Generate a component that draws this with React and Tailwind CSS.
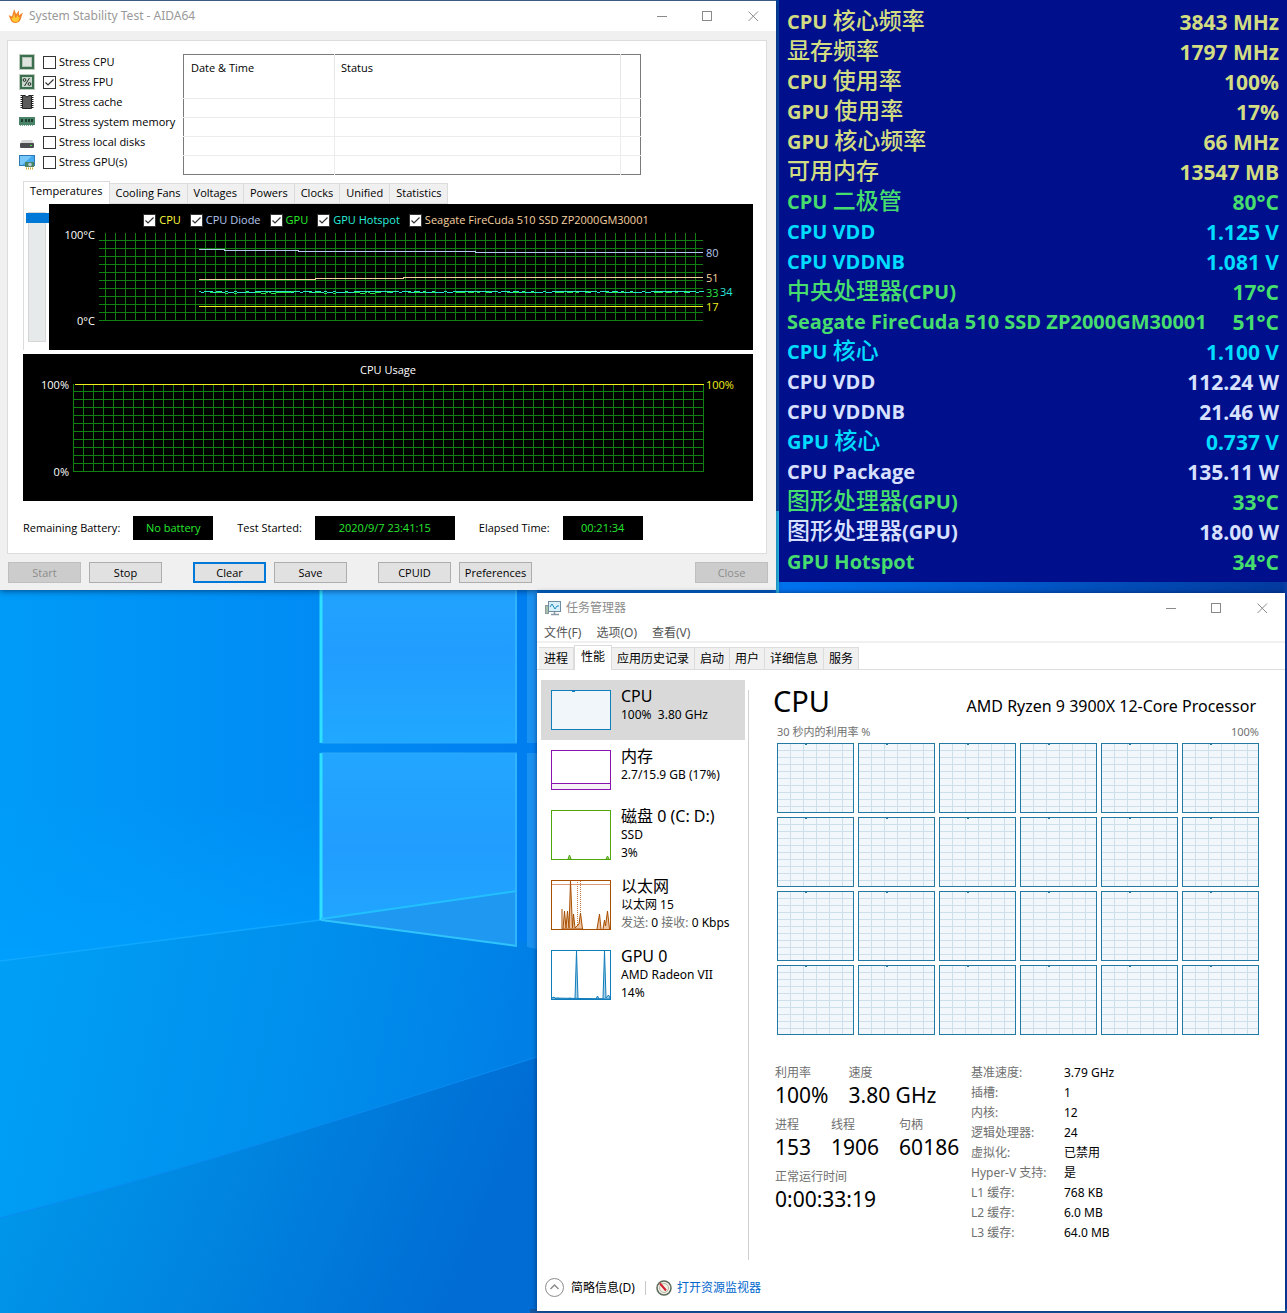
import React, { useState } from 'react';

const STRESS = [
  { id: 'cpu', label: 'Stress CPU' },
  { id: 'fpu', label: 'Stress FPU', on: true },
  { id: 'cache', label: 'Stress cache' },
  { id: 'memory', label: 'Stress system memory' },
  { id: 'disk', label: 'Stress local disks' },
  { id: 'gpu', label: 'Stress GPU(s)' },
];

const AIDA_TABS = ['Temperatures', 'Cooling Fans', 'Voltages', 'Powers', 'Clocks', 'Unified', 'Statistics'];

const LEGEND = [
  { label: 'CPU', color: 'text-[#ffff3c]' },
  { label: 'CPU Diode', color: 'text-[#b4c8f0]' },
  { label: 'GPU', color: 'text-[#28f028]' },
  { label: 'GPU Hotspot', color: 'text-[#28f0dc]' },
  { label: 'Seagate FireCuda 510 SSD ZP2000GM30001', color: 'text-[#f5d2a0]' },
];

const YELLOW = 'text-[#d2dc82]';
const GREEN = 'text-[#46dc6e]';
const CYAN = 'text-[#00dcff]';
const WHITE = 'text-[#d7e1ff]';

const SENSORS = [
  ['CPU 核心频率', '3843 MHz', YELLOW],
  ['显存频率', '1797 MHz', YELLOW],
  ['CPU 使用率', '100%', YELLOW],
  ['GPU 使用率', '17%', YELLOW],
  ['GPU 核心频率', '66 MHz', YELLOW],
  ['可用内存', '13547 MB', YELLOW],
  ['CPU 二极管', '80°C', GREEN],
  ['CPU VDD', '1.125 V', CYAN],
  ['CPU VDDNB', '1.081 V', CYAN],
  ['中央处理器(CPU)', '17°C', GREEN],
  ['Seagate FireCuda 510 SSD ZP2000GM30001', '51°C', GREEN],
  ['CPU 核心', '1.100 V', CYAN],
  ['CPU VDD', '112.24 W', WHITE],
  ['CPU VDDNB', '21.46 W', WHITE],
  ['GPU 核心', '0.737 V', CYAN],
  ['CPU Package', '135.11 W', WHITE],
  ['图形处理器(GPU)', '33°C', GREEN],
  ['图形处理器(GPU)', '18.00 W', WHITE],
  ['GPU Hotspot', '34°C', GREEN],
];

const TM_TABS = ['进程', '性能', '应用历史记录', '启动', '用户', '详细信息', '服务'];

const CPU_DETAILS = [
  ['基准速度:', '3.79 GHz'],
  ['插槽:', '1'],
  ['内核:', '12'],
  ['逻辑处理器:', '24'],
  ['虚拟化:', '已禁用'],
  ['Hyper-V 支持:', '是'],
  ['L1 缓存:', '768 KB'],
  ['L2 缓存:', '6.0 MB'],
  ['L3 缓存:', '64.0 MB'],
];

const range = (n) => Array.from({ length: n }, (_, i) => i);

function Wallpaper() {
  return (
    <svg className="absolute inset-0 h-full w-full" viewBox="0 0 1287 1313" preserveAspectRatio="xMinYMin slice" aria-hidden="true">
      <defs>
        <linearGradient id="sky" x1="0" y1="0" x2="1" y2="0">
          <stop offset="0" stopColor="#009bf8" />
          <stop offset="0.24" stopColor="#008cf4" />
          <stop offset="0.41" stopColor="#007ef0" />
          <stop offset="0.61" stopColor="#0072ee" />
          <stop offset="1" stopColor="#033a9e" />
        </linearGradient>
        <linearGradient id="glow" x1="0" y1="0" x2="0" y2="1">
          <stop offset="0" stopColor="#00a0ff" stopOpacity="0" />
          <stop offset="1" stopColor="#00a0ff" stopOpacity="0.7" />
        </linearGradient>
        <linearGradient id="floor" x1="0" y1="0" x2="1" y2="0.15">
          <stop offset="0" stopColor="#00a0f6" />
          <stop offset="0.6" stopColor="#008fec" />
          <stop offset="1" stopColor="#007fe6" />
        </linearGradient>
        <linearGradient id="low" x1="0" y1="0" x2="1" y2="0.2">
          <stop offset="0" stopColor="#009bec" />
          <stop offset="0.5" stopColor="#0085e0" />
          <stop offset="1" stopColor="#006cd4" />
        </linearGradient>
        <linearGradient id="pane" x1="0" y1="0" x2="0" y2="1">
          <stop offset="0" stopColor="#22a6ff" />
          <stop offset="0.5" stopColor="#219dff" />
          <stop offset="1" stopColor="#20a8ff" />
        </linearGradient>
      </defs>
      <rect width="1287" height="1313" fill="url(#sky)" />
      <path d="M0 800 L321 800 V920 L0 961Z" fill="url(#glow)" />
      <path d="M0 961 L321 920 L537 944 V1313 H0Z" fill="url(#floor)" />
      <path d="M0 1218 C180 1172 380 1106 537 1057 V1313 H0Z" fill="url(#low)" />
      <path d="M0 1218 C180 1172 380 1106 537 1057" fill="none" stroke="#0a8cf2" strokeWidth="1" />
      <path d="M0 961 L321 920" stroke="#10a8ff" strokeWidth="1.5" />
      <rect x="321" y="560" width="196" height="183" fill="url(#pane)" />
      <path d="M321 753 H517 V946 L321 920Z" fill="url(#pane)" />
      <path d="M321 920 L517 891 V946Z" fill="#1f98f2" />
      <path d="M527 560 H537 V743 H527Z M527 753 H537 V949 L527 947Z" fill="#1a92f2" />
      <path d="M321 560 V743 M321 753 V920" stroke="#2ee0ff" strokeWidth="3" />
      <path d="M321 919 L517 891" stroke="#22c0ff" strokeWidth="2" />
      <path d="M321 920 L517 946" stroke="#30c4fc" strokeWidth="2" />
      <path d="M516 560 V743 M516 753 V946" stroke="#30b4fc" strokeWidth="2" />
      <path d="M321 743 H517 M321 753 H517" stroke="#2aaafc" strokeWidth="1" />
      <rect x="776" y="0" width="3" height="511" fill="#0846a6" />
      <rect x="776" y="511" width="3" height="82" fill="#2cc0ee" />
      <rect x="1284" y="582" width="3" height="731" fill="#0a3ea4" />
      <rect x="530" y="1309" width="757" height="4" fill="#1458a4" />
    </svg>
  );
}

function WindowButtons() {
  return (
    <div className="flex">
      <button aria-label="Minimize" className="flex h-7 w-[46px] items-center justify-center text-[#8a8a8a]">
        <svg width="11" height="11" stroke="currentColor"><path d="M0 5.5H10" /></svg>
      </button>
      <button aria-label="Maximize" className="flex h-7 w-[45px] items-center justify-center text-[#8a8a8a]">
        <svg width="11" height="11" stroke="currentColor" fill="none"><rect x="0.5" y="0.5" width="9" height="9" /></svg>
      </button>
      <button aria-label="Close window" className="flex h-7 w-[46px] items-center justify-center text-[#8a8a8a]">
        <svg width="11" height="11" stroke="currentColor"><path d="M0.5 0.5L10 10M10 0.5L0.5 10" /></svg>
      </button>
    </div>
  );
}

function Flame() {
  return (
    <svg width="16" height="16" viewBox="0 0 16 16">
      <path d="M6 1C7 2.6 7.4 4.6 8.2 6.2C9.4 4.6 10.4 3.2 11 2.6C10.8 4.6 11 5.8 11 7.4C12 6.6 13.4 5.4 15 4.8C13.6 7 13.6 9.4 12.6 11.6C11.4 14.2 9.4 15 7.4 15C4.4 15 2.8 13.2 2.2 11C1.8 9.4 1.2 8.4 0.6 7.2C2 7.4 3 8 4 8.6C4.4 6 5.8 3.8 6 1Z" fill="#f08228" />
      <path d="M6.4 5C6.6 7.6 7 9 7.6 10C8.6 9 9.4 7.8 10 6.4C10 8.6 10.4 9.4 11.6 9.2C11.4 12 10 14 7.6 14C5 14 3.6 12.4 3.4 9.8C4.4 10.2 4.8 9.8 5 9C5.4 7.6 6 6.4 6.4 5Z" fill="#ffc832" />
    </svg>
  );
}

function StressIcon({ id }) {
  if (id === 'cpu' || id === 'fpu') {
    return (
      <svg className="shrink-0" width="16" height="16" viewBox="0 0 16 16">
        <rect x="0.5" y="0.5" width="15" height="15" fill="none" stroke="#7f9a80" strokeDasharray="1 1" />
        <rect x="1" y="1" width="14" height="14" fill="#3c6e50" />
        <rect x="3" y="3" width="10" height="10" fill={id === 'cpu' ? '#b4c4b4' : '#c8d6cc'} />
        {id === 'cpu' && <rect x="4" y="4" width="8" height="8" fill="#e0e4de" />}
        {id === 'fpu' && (
          <g fill="none" stroke="#1e2a22">
            <path d="M10.5 4L5.5 12" />
            <circle cx="5.5" cy="6" r="1.4" />
            <circle cx="10.5" cy="10" r="1.4" />
          </g>
        )}
      </svg>
    );
  }
  if (id === 'cache') {
    return (
      <svg className="shrink-0" width="16" height="16" viewBox="0 0 16 16">
        <path d="M2.5 1V15M13.5 1V15" stroke="#222" strokeWidth="2" strokeDasharray="1 1" />
        <path d="M3.5 1.5H6L8 3L10 1.5H12.5V14.5H3.5Z" fill="#5a5a5a" stroke="#222" />
      </svg>
    );
  }
  if (id === 'memory') {
    return (
      <svg className="shrink-0" width="16" height="16" viewBox="0 0 16 16">
        <rect x="0" y="3" width="16" height="8" fill="#4a8468" />
        <path d="M2 5H4V8H2ZM6 5H8V8H6ZM9 5H11V8H9ZM12 5H14V8H12Z" fill="#1e3c30" />
        <path d="M1 11.5H15" stroke="#7aa890" strokeDasharray="1 1" />
      </svg>
    );
  }
  if (id === 'disk') {
    return (
      <svg className="shrink-0" width="16" height="16" viewBox="0 0 16 16">
        <path d="M3 6H13L15 10H1Z" fill="#d4d4d4" />
        <rect x="1" y="9" width="14" height="5" rx="1" fill="#4c4c50" />
        <rect x="11" y="11" width="2" height="1" fill="#50e050" />
      </svg>
    );
  }
  return (
    <svg className="shrink-0" width="16" height="16" viewBox="0 0 16 16">
      <rect x="0.5" y="1.5" width="15" height="10" fill="#46aaf0" stroke="#2e78b4" />
      <path d="M1 2H13L3 11H1Z" fill="#78c8fa" />
      <rect x="6" y="8" width="9" height="5" fill="#4a8460" />
      <circle cx="11" cy="10.5" r="1.8" fill="#b4c8dc" />
      <path d="M7 14.5H14" stroke="#d2aa32" strokeDasharray="1 1" strokeWidth="2" />
    </svg>
  );
}

function Check({ id, label, defaultChecked, textClass }) {
  return (
    <label htmlFor={id} className="flex items-center gap-[3px] whitespace-nowrap">
      <span className="relative flex">
        <input
          id={id}
          type="checkbox"
          defaultChecked={defaultChecked}
          className="peer h-[13px] w-[13px] appearance-none border border-[#333] bg-white"
        />
        <svg className="pointer-events-none absolute inset-0 hidden peer-checked:block" width="13" height="13" fill="none" stroke="#333" strokeWidth="1.2">
          <path d="M2.5 6.5L5 9L10.5 3.5" />
        </svg>
      </span>
      <span className={textClass}>{label}</span>
    </label>
  );
}

// deterministic jitter for the two GPU traces
const jitter = (i) => (i * 7 + ((i * i) % 11)) % 3;

function TemperatureChart() {
  const noise = range(169).map((i) => `${150.5 + i * 3},${66.5 + (jitter(i) === 2 ? 1 : 0)}`).join(' ');
  const noise2 = range(169).map((i) => `${150.5 + i * 3},${67.5 - (jitter(i + 4) === 0 ? 1 : 0) + (jitter(i) === 1 && i < 60 ? 1 : 0)}`).join(' ');
  return (
    <svg className="block h-[122px] w-full" viewBox="0 0 704 122" preserveAspectRatio="xMinYMin meet" fontSize="11" shapeRendering="crispEdges">
      <g transform="translate(0 -3)">
        <g stroke="#108010">
          {range(60).map((i) => <path key={i} d={`M${56.5 + i * 10} 8V96`} />)}
          {range(11).map((i) => <path key={i} d={`M50 ${15.5 + i * 8}H654`} />)}
        </g>
        <g fill="none">
          <path d="M150 24.5H175V25.5H249V26.5H426V27.5H654" stroke="#b4c8f0" />
          <path d="M150 54.5H266V53.5H354V52.5H654" stroke="#f5d2a0" />
          <polyline points={noise2} stroke="#28e646" />
          <polyline points={noise} stroke="#28e6c8" />
          <path d="M150 81.5H654" stroke="#f0f01e" />
        </g>
        <g fill="#fff" textAnchor="end">
          <text x="46" y="14">100°C</text>
          <text x="46" y="100">0°C</text>
        </g>
        <text x="657" y="32" fill="#b4c8f0">80</text>
        <text x="657" y="57" fill="#f5d2a0">51</text>
        <text x="657" y="72" fill="#28e646">33</text>
        <text x="671" y="71" fill="#28e6dc">34</text>
        <text x="657" y="86" fill="#f0f01e">17</text>
      </g>
    </svg>
  );
}

function UsageChart() {
  return (
    <svg className="block h-[147px] w-full bg-black" viewBox="0 0 730 147" preserveAspectRatio="xMinYMin meet" fontSize="11" shapeRendering="crispEdges">
      <text x="365" y="20" fill="#fff" textAnchor="middle">CPU Usage</text>
      <g stroke="#108010">
        {range(64).map((i) => <path key={i} d={`M${50.5 + i * 10} 30V118`} />)}
        {range(11).map((i) => <path key={i} d={`M50 ${37.5 + i * 8}H681`} />)}
      </g>
      <path d="M52 30.5H681" stroke="#f0f01e" />
      <g fill="#fff" textAnchor="end">
        <text x="46" y="35">100%</text>
        <text x="46" y="122">0%</text>
      </g>
      <text x="683" y="35" fill="#f0f01e">100%</text>
    </svg>
  );
}

function AidaButton({ children, disabled, focused, className = '' }) {
  const look = disabled
    ? 'border border-[#bfbfbf] bg-[#cccccc] text-[#8c8c8c]'
    : focused
      ? 'border-2 border-[#0078d7] bg-[#e1e1e1]'
      : 'border border-[#adadad] bg-[#e1e1e1]';
  return (
    <button disabled={disabled} className={`flex h-[21px] w-[73px] items-center justify-center ${look} ${className}`}>
      {children}
    </button>
  );
}

function Readout({ label, value, width }) {
  return (
    <div className="flex items-center gap-[13px]">
      <span>{label}</span>
      <output className={`flex h-6 items-center justify-center bg-black text-[#28e632] ${width}`}>{value}</output>
    </div>
  );
}

function AidaWindow() {
  const [tab, setTab] = useState(AIDA_TABS[0]);
  return (
    <section className="min-w-0 border-t border-[#3c5a82] bg-[#f0f0f0] pb-[7px] text-[11px] leading-4 text-black shadow-[0_1px_6px_rgba(0,20,60,0.6)] [font-family:'Open_Sans','Noto_Sans_CJK_SC',sans-serif]">
      <header className="flex h-[30px] items-center justify-between bg-white pl-2">
        <div className="flex items-center gap-[5px] text-[12px] text-[#999] [font-family:'Noto_Sans','Noto_Sans_CJK_SC',sans-serif]">
          <Flame />
          <h1>System Stability Test - AIDA64</h1>
        </div>
        <WindowButtons />
      </header>

      <div className="mt-[9px] mr-[9px] ml-[7px] border border-[#dcdcdc] bg-white pb-[13px]">
        <div className="flex gap-[6px] pt-[11px] pl-[11px]">
          <ul className="w-[158px]">
            {STRESS.map((s) => (
              <li key={s.id} className="flex h-5 items-center gap-2">
                <StressIcon id={s.id} />
                <Check id={`stress-${s.id}`} label={s.label} defaultChecked={s.on} />
              </li>
            ))}
          </ul>
          <table className="mt-0.5 h-[120px] w-[458px] table-fixed border-collapse border border-[#7a7a7a] text-left">
            <thead>
              <tr className="h-[25px]">
                <th className="w-[151px] border-r border-[#e5e5e5] px-[7px] pt-0.5 font-normal">Date &amp; Time</th>
                <th className="border-r border-[#e5e5e5] px-[6px] pt-0.5 font-normal">Status</th>
                <th className="w-[20px]" />
              </tr>
            </thead>
            <tbody>
              {range(5).map((i) => (
                <tr key={i} className="h-[19px] border-b border-[#ececec] last:border-[#7a7a7a]">
                  <td className="border-r border-[#ececec]" />
                  <td className="border-r border-[#ececec]" />
                  <td />
                </tr>
              ))}
            </tbody>
          </table>
        </div>

        <div className="mr-[13px] ml-[15px] pt-[6px]">
          <div role="tablist" className="flex items-end">
            {AIDA_TABS.map((t) => (
              <button
                key={t}
                role="tab"
                aria-selected={t === tab}
                onClick={() => setTab(t)}
                className={
                  t === tab
                    ? 'h-[23px] border border-b-0 border-[#dcdcdc] bg-white px-[6px] pb-[5px]'
                    : 'h-[21px] border border-l-0 border-[#dcdcdc] bg-[#f0f0f0] px-[6px] pb-0.5'
                }
              >
                {t}
              </button>
            ))}
          </div>
          <div className="flex">
            <div className="w-[26px] border-l border-[#dcdcdc] pt-2 pl-px">
              <input
                type="range"
                aria-label="Chart scroll"
                defaultValue="0"
                className="h-[130px] w-[23px] appearance-none bg-transparent [writing-mode:vertical-lr] [&::-webkit-slider-runnable-track]:mx-auto [&::-webkit-slider-runnable-track]:w-[18px] [&::-webkit-slider-runnable-track]:border [&::-webkit-slider-runnable-track]:border-[#d6d6d6] [&::-webkit-slider-runnable-track]:bg-[#e7eaea] [&::-webkit-slider-thumb]:-ml-[3px] [&::-webkit-slider-thumb]:h-[10px] [&::-webkit-slider-thumb]:w-[23px] [&::-webkit-slider-thumb]:appearance-none [&::-webkit-slider-thumb]:bg-[#0078d7]"
              />
            </div>
            <div className="h-[146px] min-w-0 flex-1 bg-black pt-2">
              <div className="flex justify-center gap-[9px] pr-[10px]">
                {LEGEND.map((l, i) => (
                  <Check key={l.label} id={`legend-${i}`} label={l.label} defaultChecked textClass={l.color} />
                ))}
              </div>
              <TemperatureChart />
            </div>
          </div>
          <div className="mt-1">
            <UsageChart />
          </div>
        </div>

        <div className="flex gap-6 pt-[15px] pl-[15px]">
          <Readout label="Remaining Battery:" value="No battery" width="w-20" />
          <Readout label="Test Started:" value="2020/9/7 23:41:15" width="w-[140px]" />
          <Readout label="Elapsed Time:" value="00:21:34" width="w-20" />
        </div>
      </div>

      <footer className="flex gap-2 px-2 pt-2">
        <AidaButton disabled>Start</AidaButton>
        <AidaButton>Stop</AidaButton>
        <AidaButton focused className="ml-[23px]">Clear</AidaButton>
        <AidaButton>Save</AidaButton>
        <AidaButton className="ml-[23px]">CPUID</AidaButton>
        <AidaButton>Preferences</AidaButton>
        <AidaButton disabled className="ml-auto">Close</AidaButton>
      </footer>
    </section>
  );
}

// Chinese runs are set larger and lighter than the Latin text beside them
function SensorName({ text }) {
  return text.split(/([\u4e00-\u9fff]+)/).filter(Boolean).map((part, i) =>
    /[\u4e00-\u9fff]/.test(part)
      ? <span key={i} className="text-[23px] leading-none font-medium">{part}</span>
      : <span key={i}>{part}</span>
  );
}

function SensorPanel() {
  return (
    <section className="min-w-0 bg-[#000f8c] px-2 pt-[7px] pb-[5px] text-[20px] leading-[30px] font-bold [font-family:'Open_Sans','Noto_Sans_CJK_SC',sans-serif]">
      <dl>
        {SENSORS.map(([name, value, color], i) => (
          <div key={i} className={`flex h-[30px] justify-between whitespace-nowrap ${color}`}>
            <dt><SensorName text={name} /></dt>
            <dd className="text-[21px]">{value}</dd>
          </div>
        ))}
      </dl>
    </section>
  );
}

const THUMBS = {
  cpu: (
    <svg width="60" height="40" className="block" fill="none">
      <rect x="0.5" y="0.5" width="59" height="39" fill="#f1f6fa" stroke="#117dbb" />
      <path d="M21 1.5H24" stroke="#117dbb" />
    </svg>
  ),
  memory: (
    <svg width="60" height="40" className="block" fill="none" stroke="#8b12ae">
      <rect x="0.5" y="0.5" width="59" height="39" fill="#fff" />
      <path d="M0.5 33.5H59.5V39.5H0.5Z" fill="#f4f2f4" />
    </svg>
  ),
  disk: (
    <svg width="60" height="50" className="block" stroke="#4da60c">
      <rect x="0.5" y="0.5" width="59" height="49" fill="#fff" />
      <path d="M17 49L18.5 45L20 49ZM55 49L56.5 46L58 49Z" fill="#b8dca0" />
    </svg>
  ),
  ethernet: (
    <svg width="60" height="50" className="block" stroke="#a74f01">
      <rect x="0.5" y="0.5" width="59" height="49" fill="#fff" />
      <path d="M1 4.5H59" stroke="#d8987a" />
      <path d="M26.5 49V1M29.5 1V34" fill="none" stroke="#c87840" strokeDasharray="1 1" />
      <path d="M11 49V29M12 49L13.5 31L15 48L16.5 31L18 48L19.5 1L21.5 48L22.5 34L24 48L28 44L29.5 33L31.5 49ZM46 49L48.5 34L50 49M52 49L53.5 40L54.5 46L56.5 31L58.5 49" fill="#ecc4a4" />
    </svg>
  ),
  gpu: (
    <svg width="60" height="50" className="block" stroke="#117dbb">
      <rect x="0.5" y="0.5" width="59" height="49" fill="#fff" />
      <path d="M1 48L3 47L5 49L7 48L9 49H17L19 48L21 49H24L25.5 1L27 49H45L46.5 46L48 49H52L53.5 1L55 48L57.5 45L59 48V49Z" fill="#a8d0e6" />
    </svg>
  ),
};

function ResourceItem({ thumb, title, active, children }) {
  return (
    <button className={`flex w-full gap-[10px] py-[10px] pl-[10px] text-left ${active ? 'bg-[#d9d9d9]' : ''}`}>
      {THUMBS[thumb]}
      <span className="-my-1 flex flex-col whitespace-nowrap">
        <span className="text-[16px] leading-5">{title}</span>
        {children}
      </span>
    </button>
  );
}

function CoreGraph() {
  return (
    <svg className="block h-[70px] w-full border border-[#2479a3] bg-[#f1f7fb]" viewBox="0 0 75 68" preserveAspectRatio="none" shapeRendering="crispEdges">
      <g stroke="#cddfeb">
        {range(5).map((i) => <path key={i} d={`M${12.5 + i * 13} 0V68`} />)}
        {range(9).map((i) => <path key={i} d={`M0 ${6.5 + i * 7}H75`} />)}
      </g>
      <path d="M27 0.5H29" stroke="#2479a3" />
    </svg>
  );
}

function Stat({ label, value }) {
  return (
    <div>
      <dt className="leading-5 text-[#707070]">{label}</dt>
      <dd className="text-[21px] leading-6">{value}</dd>
    </div>
  );
}

function TaskManager() {
  const [tab, setTab] = useState('性能');
  return (
    <section className="min-w-0 flex-[748] bg-white text-[12px] text-black shadow-[0_0_5px_rgba(0,20,60,0.6)]">
      <header className="flex h-[30px] items-center justify-between pl-2">
        <div className="flex items-center gap-[5px] text-[#8c8c8c]">
          <svg width="16" height="16" viewBox="0 0 16 16">
            <rect x="0.5" y="5.5" width="3" height="8" fill="#a8c0a8" stroke="#8a9a9a" />
            <rect x="3.5" y="1.5" width="12" height="10" fill="#d8f0fa" stroke="#6e8ca0" />
            <path d="M5 7L7 4L10 9L12 6H14" fill="none" stroke="#1e8cc8" />
            <path d="M6 14.5H14M9.5 12V14" stroke="#8a9aa4" strokeWidth="1.5" />
          </svg>
          <h2>任务管理器</h2>
        </div>
        <WindowButtons />
      </header>
      <nav className="flex h-5 items-center gap-[15px] border-b-2 border-[#f0f0f0] pt-0.5 pl-[7px] text-[#555]">
        <button>文件(F)</button>
        <button>选项(O)</button>
        <button>查看(V)</button>
      </nav>

      <div role="tablist" className="flex items-end border-b border-[#dcdcdc] pt-0.5 pl-0.5">
        {TM_TABS.map((t) => (
          <button
            key={t}
            role="tab"
            aria-selected={t === tab}
            onClick={() => setTab(t)}
            className={
              t === tab
                ? '-mb-px h-[25px] border-x border-t border-[#dcdcdc] bg-white px-[6px] pb-[3px]'
                : 'h-[22px] border-t border-r border-[#dcdcdc] bg-[#f0f0f0] px-[5px]'
            }
          >
            {t}
          </button>
        ))}
      </div>

      <div className="flex pt-[10px] pl-1">
        <div className="w-[204px] shrink-0">
          <ResourceItem thumb="cpu" title="CPU" active>
            <span className="leading-[18px]">100%&nbsp; 3.80 GHz</span>
          </ResourceItem>
          <ResourceItem thumb="memory" title="内存">
            <span className="leading-[18px]">2.7/15.9 GB (17%)</span>
          </ResourceItem>
          <ResourceItem thumb="disk" title="磁盘 0 (C: D:)">
            <span className="leading-[18px]">SSD</span>
            <span className="leading-[18px]">3%</span>
          </ResourceItem>
          <ResourceItem thumb="ethernet" title="以太网">
            <span className="leading-[18px]">以太网 15</span>
            <span className="leading-[18px]">
              <span className="text-[#707070]">发送:</span> 0 <span className="text-[#707070]">接收:</span> 0 Kbps
            </span>
          </ResourceItem>
          <ResourceItem thumb="gpu" title="GPU 0">
            <span className="leading-[18px]">AMD Radeon VII</span>
            <span className="leading-[18px]">14%</span>
          </ResourceItem>
        </div>

        <div className="mt-[10px] ml-[3px] min-w-0 flex-1 border-l border-[#d0d0d0] pr-[26px] pb-[17px] pl-[28px]">
          <div className="flex h-[34px] items-end justify-between pr-[3px]">
            <h3 className="-ml-1 text-[29px] leading-[46px]">CPU</h3>
            <span className="text-[16px] leading-9">AMD Ryzen 9 3900X 12-Core Processor</span>
          </div>
          <div className="flex justify-between pb-[3px] text-[11px] leading-4 text-[#707070]">
            <span>30 秒内的利用率 %</span>
            <span>100%</span>
          </div>
          <div className="grid grid-cols-6 gap-1">
            {range(24).map((i) => <CoreGraph key={i} />)}
          </div>

          <div className="-ml-0.5 flex pt-7">
            <dl className="flex w-[196px] flex-col gap-2">
              <div className="flex gap-5">
                <Stat label="利用率" value="100%" />
                <Stat label="速度" value="3.80 GHz" />
              </div>
              <div className="flex gap-5">
                <Stat label="进程" value="153" />
                <Stat label="线程" value="1906" />
                <Stat label="句柄" value="60186" />
              </div>
              <Stat label="正常运行时间" value="0:00:33:19" />
            </dl>
            <dl className="grid h-[180px] grid-cols-[93px_auto] leading-5">
              {CPU_DETAILS.map(([k, v]) => (
                <React.Fragment key={k}>
                  <dt className="text-[#707070]">{k}</dt>
                  <dd>{v}</dd>
                </React.Fragment>
              ))}
            </dl>
          </div>
        </div>
      </div>

      <footer className="flex h-[51px] items-center pt-1 pl-2">
        <button className="flex items-center gap-[7px]">
          <svg width="19" height="19" fill="none" stroke="#8c8c8c">
            <circle cx="9.5" cy="9.5" r="9" />
            <path d="M5.5 11L9.5 7L13.5 11" strokeWidth="1.5" />
          </svg>
          简略信息(D)
        </button>
        <span className="mx-[10px] h-[14px] w-px bg-[#c8c8c8]" />
        <a href="#resmon" className="flex items-center gap-[5px] text-[#0066cc]">
          <svg width="16" height="16" fill="none">
            <circle cx="8" cy="8" r="7" fill="#f4f0e8" stroke="#5a6a5a" strokeWidth="1.5" />
            <circle cx="8" cy="8" r="4.5" stroke="#b0b8a0" />
            <path d="M4 3.5L10 10.5" stroke="#d21e28" strokeWidth="2" />
          </svg>
          打开资源监视器
        </a>
      </footer>
    </section>
  );
}

export default function App() {
  return (
    <main className="relative min-h-screen w-full overflow-hidden [font-family:'Noto_Sans','Noto_Sans_CJK_SC',sans-serif]">
      <Wallpaper />
      <div className="relative grid grid-cols-[776fr_508fr] items-start gap-[3px]">
        <AidaWindow />
        <SensorPanel />
      </div>
      <div className="relative mt-[3px] flex pr-0.5 pb-0.5">
        <div className="flex-[537]" />
        <TaskManager />
      </div>
    </main>
  );
}
